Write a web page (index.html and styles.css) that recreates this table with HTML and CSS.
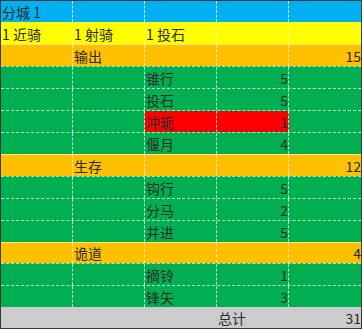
FILE: index.html
```html
<!DOCTYPE html>
<html>
<head>
<meta charset="utf-8">
<link rel="stylesheet" href="styles.css">
</head>
<body>
<div class="sheet">
  <div class="row blue"><div class="c">分城 1</div><div class="c"></div><div class="c"></div><div class="c"></div><div class="c"></div></div>
  <div class="row yellow"><div class="c">1 近骑</div><div class="c">1 射骑</div><div class="c">1 投石</div><div class="c"></div><div class="c"></div></div>
  <div class="row orange"><div class="c"></div><div class="c">输出</div><div class="c"></div><div class="c"></div><div class="c num">15</div></div>
  <div class="row green"><div class="c"></div><div class="c"></div><div class="c">锥行</div><div class="c num">5</div><div class="c"></div></div>
  <div class="row green"><div class="c"></div><div class="c"></div><div class="c">投石</div><div class="c num">5</div><div class="c"></div></div>
  <div class="row green"><div class="c"></div><div class="c"></div><div class="c red">冲轭</div><div class="c num red">1</div><div class="c"></div></div>
  <div class="row green"><div class="c"></div><div class="c"></div><div class="c">偃月</div><div class="c num">4</div><div class="c"></div></div>
  <div class="row orange"><div class="c"></div><div class="c">生存</div><div class="c"></div><div class="c"></div><div class="c num">12</div></div>
  <div class="row green"><div class="c"></div><div class="c"></div><div class="c">钩行</div><div class="c num">5</div><div class="c"></div></div>
  <div class="row green"><div class="c"></div><div class="c"></div><div class="c">分马</div><div class="c num">2</div><div class="c"></div></div>
  <div class="row green"><div class="c"></div><div class="c"></div><div class="c">并进</div><div class="c num">5</div><div class="c"></div></div>
  <div class="row orange short"><div class="c"></div><div class="c">诡道</div><div class="c"></div><div class="c"></div><div class="c num">4</div></div>
  <div class="row green"><div class="c"></div><div class="c"></div><div class="c">摘铃</div><div class="c num">1</div><div class="c"></div></div>
  <div class="row green"><div class="c"></div><div class="c"></div><div class="c">锋矢</div><div class="c num">3</div><div class="c"></div></div>
  <div class="row gray short"><div class="c"></div><div class="c"></div><div class="c"></div><div class="c">总计</div><div class="c num">31</div></div>
</div>
</body>
</html>
```

FILE: styles.css
```css
html, body {
  margin: 0;
  padding: 0;
  background: #ffffff;
}
.sheet {
  width: 362px;
  height: 329px;
  box-sizing: border-box;
  border: 1px solid #3a3a3a;
  display: flex;
  flex-direction: column;
  font-family: "Noto Sans CJK SC", "Noto Sans", sans-serif;
  font-size: 14px;
  color: #2a2a2a;
}
.row {
  display: grid;
  grid-template-columns: 72px 72px 72px 72px 72px;
  height: 22px;
  box-sizing: border-box;
  border-top: 1px dashed rgba(255, 255, 255, 0.7);
}
.row.short {
  height: 21px;
}
.row.blue {
  height: 21px;
  border-top: none;
  background: #00b0f0;
}
.row.yellow {
  border-top: none;
  background: #ffff00;
}
.row.orange {
  background: #ffc000;
  border-top-style: solid;
  border-top-color: rgba(255, 255, 230, 0.55);
}
.row.green {
  background: #00b050;
}
.row.gray {
  background: #cccccc;
  border-top: none;
}
.c {
  box-sizing: border-box;
  border-right: 1px dashed rgba(255, 255, 255, 0.75);
  padding-left: 1px;
  padding-right: 1px;
  display: flex;
  align-items: flex-end;
  line-height: 20px;
  white-space: pre;
  overflow: hidden;
}
.c:last-child {
  border-right: none;
}
.row.gray .c {
  border-right: none;
}
.c.num {
  justify-content: flex-end;
  padding-right: 0;
}
.c.red {
  background: #ff0000;
  box-shadow: inset 0 1px 0 rgba(120, 60, 30, 0.55), inset 0 -1px 0 rgba(120, 60, 30, 0.55);
}
```
